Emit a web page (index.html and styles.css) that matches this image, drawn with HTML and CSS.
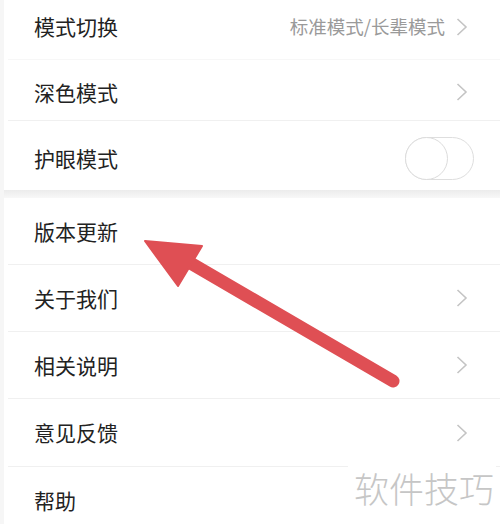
FILE: index.html
```html
<!DOCTYPE html>
<html lang="zh">
<head>
<meta charset="utf-8">
<link rel="stylesheet" href="styles.css">
</head>
<body>
<div class="page">
  <ul class="list">
    <li class="row row-first">
      <span class="label">模式切换</span>
      <span class="right">
        <span class="value">标准模式/长辈模式</span>
        <svg class="chev" width="12" height="18" viewBox="0 0 12 18"><polyline points="1.5,1 10,9 1.5,17" fill="none" stroke="#c4c4c4" stroke-width="1.6"/></svg>
      </span>
    </li>
    <li class="row row-second">
      <span class="label">深色模式</span>
      <svg class="chev" width="12" height="18" viewBox="0 0 12 18"><polyline points="1.5,1 10,9 1.5,17" fill="none" stroke="#c4c4c4" stroke-width="1.6"/></svg>
    </li>
    <li class="row row-third">
      <span class="label">护眼模式</span>
      <span class="switch"><span class="knob"></span></span>
    </li>
  </ul>
  <div class="gap"></div>
  <ul class="list">
    <li class="row">
      <span class="label">版本更新</span>
    </li>
    <li class="row">
      <span class="label">关于我们</span>
      <svg class="chev" width="12" height="18" viewBox="0 0 12 18"><polyline points="1.5,1 10,9 1.5,17" fill="none" stroke="#c4c4c4" stroke-width="1.6"/></svg>
    </li>
    <li class="row">
      <span class="label">相关说明</span>
      <svg class="chev" width="12" height="18" viewBox="0 0 12 18"><polyline points="1.5,1 10,9 1.5,17" fill="none" stroke="#c4c4c4" stroke-width="1.6"/></svg>
    </li>
    <li class="row row-tall">
      <span class="label">意见反馈</span>
      <svg class="chev" width="12" height="18" viewBox="0 0 12 18"><polyline points="1.5,1 10,9 1.5,17" fill="none" stroke="#c4c4c4" stroke-width="1.6"/></svg>
    </li>
    <li class="row">
      <span class="label">帮助</span>
    </li>
  </ul>
  <svg class="arrow" width="500" height="524" viewBox="0 0 500 524">
    <line x1="393" y1="381" x2="180" y2="257" stroke="#df4f54" stroke-width="13" stroke-linecap="round"/>
    <polygon points="145,241 202,246 178,286" fill="#df4f54" stroke="#df4f54" stroke-width="2" stroke-linejoin="round"/>
  </svg>
  <div class="watermark">软件技巧</div>
</div>
</body>
</html>
```

FILE: styles.css
```css
html, body {
  margin: 0;
  padding: 0;
  background: #ffffff;
}
.page {
  position: relative;
  width: 500px;
  height: 524px;
  overflow: hidden;
  font-family: "Noto Sans CJK SC", "Noto Sans", sans-serif;
  border-left: 4px solid #f6f6f6;
  box-sizing: border-box;
}
.list {
  list-style: none;
  margin: 0;
  padding: 0;
}
.row {
  box-sizing: border-box;
  height: 67px;
  display: flex;
  align-items: center;
  justify-content: space-between;
  padding: 0 32px 0 26px;
  border-bottom: 1px solid #f0f0f0;
  margin-left: 4px;
}
.row-first {
  height: 60px;
  padding-bottom: 6px;
  border-bottom-color: #f7f7f7;
}
.row-second {
  height: 61px;
  padding-top: 4px;
}
.row-third {
  height: 69px;
  padding-top: 6px;
  border-bottom: none;
}
.row-tall {
  height: 68px;
}
.label {
  font-size: 21px;
  color: #222222;
  line-height: 1;
}
.right {
  display: flex;
  align-items: center;
  gap: 11px;
}
.value {
  font-size: 18.5px;
  color: #9a9a9a;
  line-height: 1;
}
.chev {
  display: block;
}
.switch {
  position: relative;
  width: 69px;
  height: 43px;
  box-sizing: border-box;
  border: 1.5px solid #dedede;
  border-radius: 22px;
  margin-right: -6px;
}
.knob {
  position: absolute;
  left: -1.5px;
  top: -1.5px;
  width: 43px;
  height: 43px;
  box-sizing: border-box;
  border: 1.5px solid #dcdcdc;
  border-radius: 50%;
  background: #ffffff;
}
.gap {
  height: 8px;
  background: linear-gradient(#ececec, #f8f8f8);
}
.arrow {
  position: absolute;
  left: -4px;
  top: 0;
}
.watermark {
  position: absolute;
  right: 4px;
  top: 466px;
  padding: 0 2px 0 6px;
  background: #ffffff;
  font-size: 35px;
  font-weight: 300;
  color: #c6c6c6;
  line-height: 44px;
  letter-spacing: 0;
}
```
